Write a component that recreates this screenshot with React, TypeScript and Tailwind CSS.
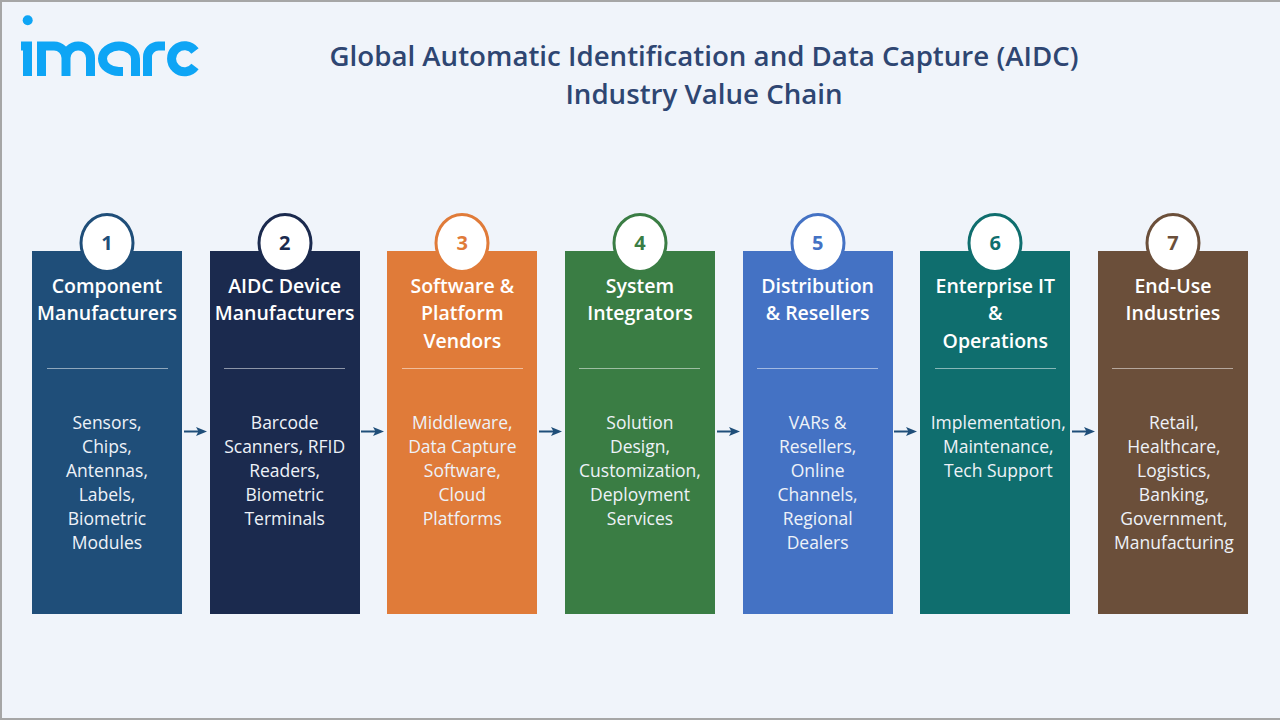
const font = "font-['Open_Sans','Noto_Sans',sans-serif]";

const steps = [
  { n: '1', title: ['Component', 'Manufacturers'], body: ['Sensors,', 'Chips,', 'Antennas,', 'Labels,', 'Biometric', 'Modules'], bg: 'bg-[#1f4e79]', ring: 'border-[#1f4e79]', text: 'text-[#1f4e79]', shift: '' },
  { n: '2', title: ['AIDC Device', 'Manufacturers'], body: ['Barcode', 'Scanners, RFID', 'Readers,', 'Biometric', 'Terminals'], bg: 'bg-[#1b2a4e]', ring: 'border-[#1b2a4e]', text: 'text-[#1b2a4e]', shift: '' },
  { n: '3', title: ['Software &', 'Platform', 'Vendors'], body: ['Middleware,', 'Data Capture', 'Software,', 'Cloud', 'Platforms'], bg: 'bg-[#e07b39]', ring: 'border-[#e07b39]', text: 'text-[#e07b39]', shift: '' },
  { n: '4', title: ['System', 'Integrators'], body: ['Solution', 'Design,', 'Customization,', 'Deployment', 'Services'], bg: 'bg-[#3a7d44]', ring: 'border-[#3a7d44]', text: 'text-[#3a7d44]', shift: '' },
  { n: '5', title: ['Distribution', '& Resellers'], body: ['VARs &', 'Resellers,', 'Online', 'Channels,', 'Regional', 'Dealers'], bg: 'bg-[#4472c4]', ring: 'border-[#4472c4]', text: 'text-[#4472c4]', shift: '' },
  { n: '6', title: ['Enterprise IT', '&', 'Operations'], body: ['Implementation,', 'Maintenance,', 'Tech Support'], bg: 'bg-[#0f6e6e]', ring: 'border-[#0f6e6e]', text: 'text-[#0f6e6e]', shift: 'pl-[6px]' },
  { n: '7', title: ['End-Use', 'Industries'], body: ['Retail,', 'Healthcare,', 'Logistics,', 'Banking,', 'Government,', 'Manufacturing'], bg: 'bg-[#6b4f3a]', ring: 'border-[#6b4f3a]', text: 'text-[#6b4f3a]', shift: 'pl-[2px]' },
];

function Logo() {
  return (
    <svg width="180" height="62" viewBox="0 0 180 62" fill="none" stroke="#0ea5f5" strokeWidth="9">
      <circle cx="6.700" cy="5.300" r="5" fill="#0ea5f5" stroke="none" />
      <path d="M0 31h6.500v30" />
      <path d="M20.500 61V31H33a12 12 0 0 1 12 12v18M45 43a12 12 0 0 1 12-12h.5a12 12 0 0 1 12 12v18" />
      <path d="M114.500 61V43.750a16.500 12.750 0 1 0-16.500 12.750h4" />
      <path d="M126.500 61V42a11 11 0 0 1 11-11h6.500" />
      <path d="M174 36a13 13 0 1 0 0 15.500" />
    </svg>
  );
}

function Arrow() {
  return (
    <svg width="24" height="9" viewBox="0 0 24 9" className="shrink-0 -mt-[2px]">
      <path d="M0 4.500h16" stroke="#1f4e79" strokeWidth="2" />
      <path d="M12 0l11 4.500-11 4.500 2.500-4.500z" fill="#1f4e79" />
    </svg>
  );
}

function Card({ step }: { step: (typeof steps)[number] }) {
  return (
    <div className={`relative w-[150px] h-[363px] shrink-0 flex flex-col items-center text-white ${step.bg}`}>
      <div className={`absolute -top-[38px] left-1/2 -translate-x-1/2 w-[55px] h-[60px] rounded-[50%] bg-white border-[3px] flex items-center justify-center text-[20px] font-bold ${step.ring} ${step.text}`}>
        {step.n}
      </div>
      <div className="h-[117px] w-full pt-[21px] text-center text-[19.5px] leading-[27.300px] font-semibold whitespace-nowrap">
        {step.title.map(line => <div key={line}>{line}</div>)}
      </div>
      <div className="w-[121px] h-px bg-white/50" />
      <div className={`pt-[41px] text-center text-[17.500px] leading-[24px] whitespace-nowrap text-[#eef2f8] ${step.shift}`}>
        {step.body.map(line => <div key={line}>{line}</div>)}
      </div>
    </div>
  );
}

export default function App() {
  return (
    <div className={`w-[1280px] h-[720px] overflow-hidden bg-[#f0f4fa] border-t-2 border-l-2 border-b-2 border-[#a6a6a6] flex flex-col ${font}`}>
      <div className="h-[249px] shrink-0 flex items-start">
        <div className="pl-[19px] pt-[13px] w-[200px] shrink-0">
          <Logo />
        </div>
        <h1 className="w-[1004px] pt-[34px] text-center text-[27.660px] leading-[38px] font-semibold text-[#2e4672]">
          Global Automatic Identification and Data Capture (AIDC)
          <br />
          Industry Value Chain
        </h1>
      </div>
      <div className="flex pl-[30px] pr-[32px] justify-between items-start">
        {steps.map((step, i) => (
          <div key={step.n} className="contents">
            <Card step={step} />
            {i < steps.length - 1 && <div className="w-[27.660px] h-[363px] flex items-center justify-center"><Arrow /></div>}
          </div>
        ))}
      </div>
    </div>
  );
}
